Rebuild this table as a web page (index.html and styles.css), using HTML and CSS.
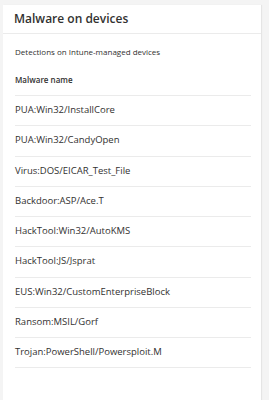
FILE: index.html
```html
<!DOCTYPE html>
<html>
<head>
<meta charset="utf-8">
<link rel="stylesheet" href="styles.css">
</head>
<body>
<div class="card">
  <div class="card-header">Malware on devices</div>
  <div class="card-body">
    <div class="subtitle">Detections on Intune-managed devices</div>
    <div class="colhead">Malware name</div>
    <div class="row">PUA:Win32/InstallCore</div>
    <div class="row">PUA:Win32/CandyOpen</div>
    <div class="row">Virus:DOS/EICAR_Test_File</div>
    <div class="row">Backdoor:ASP/Ace.T</div>
    <div class="row">HackTool:Win32/AutoKMS</div>
    <div class="row">HackTool:JS/Jsprat</div>
    <div class="row">EUS:Win32/CustomEnterpriseBlock</div>
    <div class="row">Ransom:MSIL/Gorf</div>
    <div class="row">Trojan:PowerShell/Powersploit.M</div>
  </div>
</div>
</body>
</html>
```
FILE: styles.css
```css
html, body {
  margin: 0;
  height: 100%;
}
body {
  background: #f4f4f4;
  padding: 5px 8px 0 3px;
  box-sizing: border-box;
  font-family: "Open Sans", "Noto Sans", sans-serif;
  color: #323130;
  overflow: hidden;
}
.card {
  background: #fff;
  height: 100%;
  box-shadow: 1px 0 1px rgba(0,0,0,0.06);
}
.card-header {
  height: 28px;
  line-height: 28px;
  padding-left: 11px;
  font-size: 12px;
  font-weight: 600;
  border-bottom: 1px solid #ebebeb;
}
.card-body {
  padding: 0 10px 0 12px;
}
.subtitle {
  height: 36px;
  line-height: 36px;
  font-size: 8px;
}
.colhead {
  line-height: 20px;
  padding-bottom: 5px;
  font-size: 8px;
  font-weight: 600;
  border-bottom: 1px solid #ebebeb;
}
.row {
  height: 29.25px;
  line-height: 28.5px;
  font-size: 9.5px;
  border-bottom: 1px solid #ebebeb;
}
```
